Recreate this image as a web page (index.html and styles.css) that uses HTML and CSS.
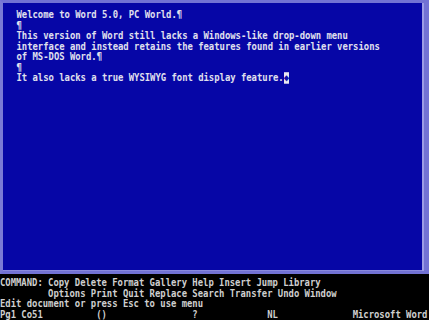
FILE: index.html
```html
<!DOCTYPE html>
<html>
<head>
<meta charset="utf-8">
<link rel="stylesheet" href="styles.css">
</head>
<body>
<div class="screen">
  <div class="window">
    <div class="doc">
      <div class="line">Welcome to Word 5.0, PC World.¶</div>
      <div class="line">¶</div>
      <div class="line">This version of Word still lacks a Windows-like drop-down menu</div>
      <div class="line">interface and instead retains the features found in earlier versions</div>
      <div class="line">of MS-DOS Word.¶</div>
      <div class="line">¶</div>
      <div class="line">It also lacks a true WYSIWYG font display feature.<span class="cursor">◆</span></div>
    </div>
  </div>
  <div class="menu">
    <div class="line">COMMAND: Copy Delete Format Gallery Help Insert Jump Library</div>
    <div class="line">         Options Print Quit Replace Search Transfer Undo Window</div>
    <div class="line">Edit document or press Esc to use menu</div>
    <div class="line">Pg1 Co51          ()                ?             NL              Microsoft Word</div>
  </div>
</div>
</body>
</html>
```

FILE: styles.css
```css
html, body {
  margin: 0;
  padding: 0;
  background: #000;
}
.screen {
  width: 429px;
  height: 320px;
  display: flex;
  flex-direction: column;
  background: #000;
  overflow: hidden;
  font-family: "DejaVu Sans Mono", "Liberation Mono", monospace;
  font-weight: bold;
  font-size: 8.9px;
  line-height: 10.5px;
}
.window {
  height: 274px;
  box-sizing: border-box;
  background: #0606a6;
  border-top: 3px solid #7272d4;
  border-left: 3px solid #7a7ad6;
  border-right: 5px solid #7272d4;
  border-bottom: 3px solid #7272d4;
  box-shadow: inset -2px 0 0 #9c9ce6, inset 0 -1px 0 #8a8adf;
  padding: 7px 0 0 13.5px;
}
.doc {
  color: #e0e0ee;
}
.line {
  white-space: pre;
  height: 10.5px;
  transform: scaleY(1.15);
}
.cursor {
  background: #e8e8f0;
  color: #1010a8;
}
.menu {
  flex: 1;
  padding-top: 4px;
  color: #cfcfcf;
}
```
